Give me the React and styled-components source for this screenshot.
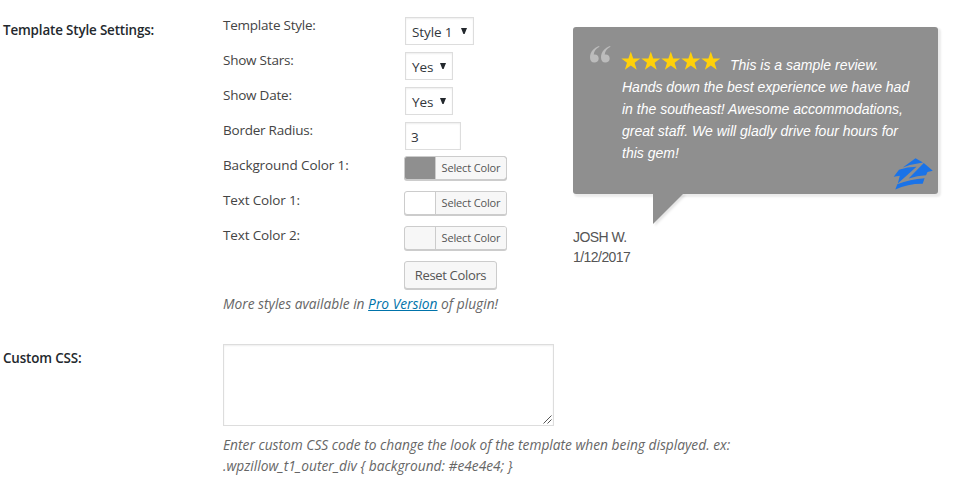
import React from "react";
import styled, { createGlobalStyle } from "styled-components";

const GlobalStyle = createGlobalStyle`
  * { box-sizing: border-box; }
  body {
    margin: 0;
    background: #fff;
    color: #444;
    font-family: "Open Sans", "Noto Sans", sans-serif;
    font-size: 13.5px;
    overflow: hidden;
  }
`;

const Page = styled.main`
  width: 955px;
  height: 484px;
  padding-left: 3px;
  display: grid;
  grid-template-columns: 220px 350px 1fr;
  grid-template-rows: 344px 1fr;
`;

const Heading = styled.h2`
  margin: 0;
  padding-top: ${(p) => p.$top}px;
  font-size: 13.4px;
  font-weight: 600;
  line-height: 18px;
  color: #23282d;
  letter-spacing: -0.15px;
  white-space: nowrap;
`;

const Settings = styled.section`
  padding-top: 17px;
`;

const Row = styled.div`
  display: grid;
  grid-template-columns: 181px 1fr;
  align-items: start;
  height: 35px;
`;

const Label = styled.label`
  line-height: 17px;
  letter-spacing: ${(p) => p.$spacing ?? -0.23}px;
`;

const Field = styled.div`
  display: flex;
  align-items: center;
  justify-content: space-between;
  width: ${(p) => p.$width}px;
  height: 28px;
  margin-left: 1px;
  padding: ${(p) => (p.$select ? "1px 6px 0 6px" : "1px 5px 0")};
  border: 1px solid #ddd;
  background: #fff;
  box-shadow: inset 0 1px 2px rgba(0, 0, 0, 0.07);
  color: #32373c;
  font-size: 13.5px;
  letter-spacing: -0.1px;
  white-space: nowrap;
`;

const Arrow = styled.svg`
  width: 6px;
  height: 6px;
  margin-top: -1px;
  fill: #23282d;
`;

const ColorButton = styled.button`
  display: flex;
  width: 103px;
  height: 24px;
  margin: -1px 0 0;
  padding: 0;
  overflow: hidden;
  border: 1px solid #ccc;
  border-radius: 3px;
  background: ${(p) => p.$color};
  box-shadow: 0 1px 0 #ccc;
`;

const ColorText = styled.span`
  flex: 1;
  height: 100%;
  margin-left: 30px;
  border-left: 1px solid #ccc;
  background: #f7f7f7;
  color: #555;
  font-family: "Open Sans", sans-serif;
  font-size: 11px;
  line-height: 22px;
  letter-spacing: -0.15px;
  text-align: center;
  white-space: nowrap;
`;

const ResetButton = styled.button`
  width: 93px;
  height: 28px;
  margin: -1px 0 0;
  padding: 0;
  border: 1px solid #ccc;
  border-radius: 3px;
  background: #f7f7f7;
  box-shadow: 0 1px 0 #ccc;
  color: #555;
  font-family: "Open Sans", sans-serif;
  font-size: 13px;
  letter-spacing: -0.33px;
  line-height: 26px;
`;

const Note = styled.p`
  margin: ${(p) => p.$top}px 0 0;
  color: #666;
  font-size: 13.75px;
  font-style: italic;
  line-height: 21px;
  white-space: nowrap;
`;

const ProLink = styled.a`
  color: #0073aa;
  text-decoration: underline;
`;

const Preview = styled.section`
  padding-top: 27px;
  font-family: "Liberation Sans", Arial, sans-serif;
  font-size: 14px;
`;

const Bubble = styled.blockquote`
  position: relative;
  width: 365px;
  height: 167px;
  margin: 0;
  padding: 27px 0 0 49px;
  border-radius: 3px;
  background: #8f8f8f;
  box-shadow: 2px 2px 2px 1px rgba(0, 0, 0, 0.08);
  color: #fff;
  font-style: italic;
  line-height: 22px;
  white-space: nowrap;
`;

const FirstLine = styled.div`
  display: flex;
  gap: 9px;
`;

const Stars = styled.svg`
  width: 100px;
  height: 20px;
  margin: -4px 0 0 -1px;
  fill: #ffd10a;
`;

const QuoteMark = styled.svg`
  position: absolute;
  left: 17px;
  top: 19px;
  width: 21px;
  height: 17px;
  fill: #bcbcbc;
`;

const Tail = styled.svg`
  position: absolute;
  left: 80px;
  top: 166px;
  width: 36px;
  height: 36px;
  filter: drop-shadow(2px 2px 1px rgba(0, 0, 0, 0.1));
  fill: #8f8f8f;
`;

const Logo = styled.svg`
  position: absolute;
  left: 320px;
  top: 131px;
  width: 40px;
  height: 32px;
  fill: #1a73e8;
`;

const Reviewer = styled.div`
  padding-top: 33px;
  color: #555;
  font-size: 14px;
  letter-spacing: -0.55px;
  line-height: 20px;
`;

const CustomCss = styled.section`
  grid-column: 2 / 4;
`;

const CssInput = styled.div`
  display: flex;
  align-items: flex-end;
  justify-content: flex-end;
  width: 331px;
  height: 82px;
  padding: 1px;
  border: 1px solid #ddd;
  box-shadow: inset 0 1px 2px rgba(0, 0, 0, 0.07);
`;

const Grip = styled.svg`
  width: 9px;
  height: 9px;
  stroke: #555;
  fill: none;
`;

function Select({ width, children }) {
  return (
    <Field $width={width} $select>
      <span>{children}</span>
      <Arrow viewBox="0 0 6 6"><path d="M0 0H6L3.6 6H2.4Z" /></Arrow>
    </Field>
  );
}

function ColorRow({ label, color, spacing }) {
  return (
    <Row>
      <Label $spacing={spacing}>{label}</Label>
      <ColorButton $color={color}><ColorText>Select Color</ColorText></ColorButton>
    </Row>
  );
}

const STAR = "M9.5 0L11.9 7H19L13.3 11.3L15.4 18.3L9.5 14.1L3.6 18.3L5.7 11.3L0 7H7.1Z";
const QUOTE = "M9 0C4 1.6 0 6 0 11.4C0 14.4 1.7 16.5 4.3 16.5C6.8 16.5 8.7 14.8 8.7 12.4C8.7 10 7 8.4 4.8 8.4L3.7 8.6C4 5.2 6 2.5 9.5 .8Z";

export default function App() {
  return (
    <>
      <GlobalStyle />
      <Page>
        <Heading $top={21}>Template Style Settings:</Heading>
        <Settings>
          <Row><Label>Template Style:</Label><Select width={69}>Style 1</Select></Row>
          <Row><Label>Show Stars:</Label><Select width={48}>Yes</Select></Row>
          <Row><Label>Show Date:</Label><Select width={48}>Yes</Select></Row>
          <Row><Label>Border Radius:</Label><Field $width={56}>3</Field></Row>
          <ColorRow label="Background Color 1:" color="#8f8f8f" spacing={-0.1} />
          <ColorRow label="Text Color 1:" color="#fff" spacing={-0.15} />
          <ColorRow label="Text Color 2:" color="#f7f7f7" spacing={-0.15} />
          <Row><span /><ResetButton>Reset Colors</ResetButton></Row>
          <Note $top={-4}>More styles available in <ProLink>Pro Version</ProLink> of plugin!</Note>
        </Settings>
        <Preview>
          <Bubble>
            <QuoteMark viewBox="0 0 21 17">
              <path d={QUOTE} />
              <path d={QUOTE} transform="translate(11 0)" />
            </QuoteMark>
            <FirstLine>
              <Stars viewBox="0 0 100 20">
                {[0, 1, 2, 3, 4].map((n) => <path key={n} d={STAR} transform={`translate(${n * 20 + 0.3} 1.5)`} />)}
              </Stars>
              <span>This is a sample review.</span>
            </FirstLine>
            Hands down the best experience we have had<br />
            in the southeast! Awesome accommodations,<br />
            great staff. We will gladly drive four hours for<br />
            this gem!
            <Tail viewBox="0 0 36 36"><path d="M0 0H31L0 31Z" /></Tail>
            <Logo viewBox="0 0 40 32">
              <path d="M22.5 .3L30 4.5Q19 6 9.8 9.5Z" />
              <path d="M.7 18.7L6 11.8Q14 9 23.5 8.8L4.8 25.4L6.8 17.8Z" />
              <path d="M30.8 5L39.8 12.7L34.5 14L33 17.2Q24 17.8 15.6 20.5Z" />
              <path d="M4.3 26.2Q17 21 31.6 20.2L29.7 25.7Q15 25.5 2.3 31.6Z" />
            </Logo>
          </Bubble>
          <Reviewer>JOSH W.<br />1/12/2017</Reviewer>
        </Preview>
        <Heading $top={5}>Custom CSS:</Heading>
        <CustomCss>
          <CssInput><Grip viewBox="0 0 9 9"><path d="M.5 8.5L8.5 .5M4.5 8.5L8.5 4.5" /></Grip></CssInput>
          <Note $top={8}>
            Enter custom CSS code to change the look of the template when being displayed. ex:<br />
            .wpzillow_t1_outer_div {"{ background: #e4e4e4; }"}
          </Note>
        </CustomCss>
      </Page>
    </>
  );
}
